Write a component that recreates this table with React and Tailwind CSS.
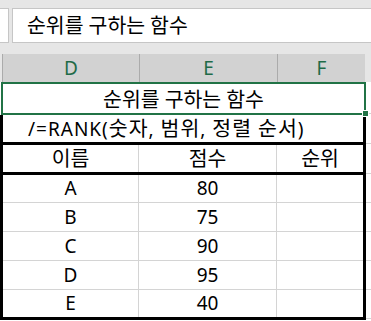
import React from 'react';

const font = { fontFamily: '"Noto Sans", "Noto Sans CJK KR", sans-serif' };

// Hangul runs a touch larger so their width matches the Malgun Gothic look
const K = ({ children }) => <span className="text-[20.5px]">{children}</span>;

const rows = [
  ['A', '80'],
  ['B', '75'],
  ['C', '90'],
  ['D', '95'],
  ['E', '40'],
];

const stubs = ['h-[32px]', 'h-[30px]', 'h-[30px]', 'h-[29px]', 'h-[29px]', 'h-[29px]', 'h-[29px]', 'h-[29px]'];

export default function App() {
  return (
    <div className="w-[371px] h-[321px] bg-white overflow-hidden text-black text-[19px] leading-none" style={font}>
      {/* formula bar */}
      <div className="h-[54px] bg-[#e6e6e6] flex pt-[8px]">
        <div className="w-[9px] h-[35px] bg-white border border-l-0 border-[#c6c6c6]" />
        <div className="ml-[3px] flex-1 h-[35px] bg-white border border-r-0 border-[#c6c6c6] pl-[14px] flex items-center">
          <span>
            <K>순위를</K> <K>구하는</K> <K>함수</K>
          </span>
        </div>
      </div>

      {/* column headers */}
      <div className="h-[28px] flex bg-[#e6e6e6] text-[#1f6b48]">
        <div className="w-[2px]" />
        <div className="w-[137px] bg-[#d2d2d2] border-l border-[#ababab] flex items-center justify-center">D</div>
        <div className="w-[138px] bg-[#d2d2d2] border-l border-[#ababab] flex items-center justify-center">E</div>
        <div className="w-[88px] bg-[#d2d2d2] border-l border-[#ababab] flex items-center justify-center">F</div>
      </div>

      <div className="flex">
        <div className="w-[366px] relative">
          {/* selected title cell */}
          <div className="ml-[1px] w-[365px] h-[33px] border-2 border-[#217346] flex items-center justify-center pt-[1px]">
            <span>
              <K>순위를</K> <K>구하는</K> <K>함수</K>
            </span>
          </div>
          <div className="absolute left-[362px] top-[28px] w-[7px] h-[7px] bg-[#217346] border border-white" />

          <div className="border-x-[3px] border-b-[3px] border-black">
            <div className="h-[30px] border-b-[3px] border-black flex items-center pl-[25px]">
              <span className="tracking-[1px]">
                /=RANK(<K>숫자</K>, <K>범위</K>, <K>정렬</K> <K>순서</K>)
              </span>
            </div>
            <div className="h-[30px] border-b-[3px] border-black flex">
              <div className="w-[136px] border-r border-[#d4d4d4] flex items-center justify-center"><K>이름</K></div>
              <div className="w-[138px] border-r border-[#d4d4d4] flex items-center justify-center"><K>점수</K></div>
              <div className="flex-1 flex items-center justify-center"><K>순위</K></div>
            </div>
            {rows.map(([name, score], i) => (
              <div
                key={name + i}
                className={`flex ${i === 0 ? 'h-[28px]' : i === 4 ? 'h-[27px]' : 'h-[29px]'} ${i < 4 ? 'border-b border-[#d4d4d4]' : ''}`}
              >
                <div className="w-[136px] border-r border-[#d4d4d4] flex items-center justify-center">{name}</div>
                <div className="w-[138px] border-r border-[#d4d4d4] flex items-center justify-center">{score}</div>
                <div className="flex-1" />
              </div>
            ))}
          </div>
        </div>

        {/* gridline stubs right of the table */}
        <div className="flex-1">
          {stubs.map((h, i) => (
            <div key={i} className={`${h} border-b border-[#d4d4d4]`} />
          ))}
        </div>
      </div>
    </div>
  );
}
